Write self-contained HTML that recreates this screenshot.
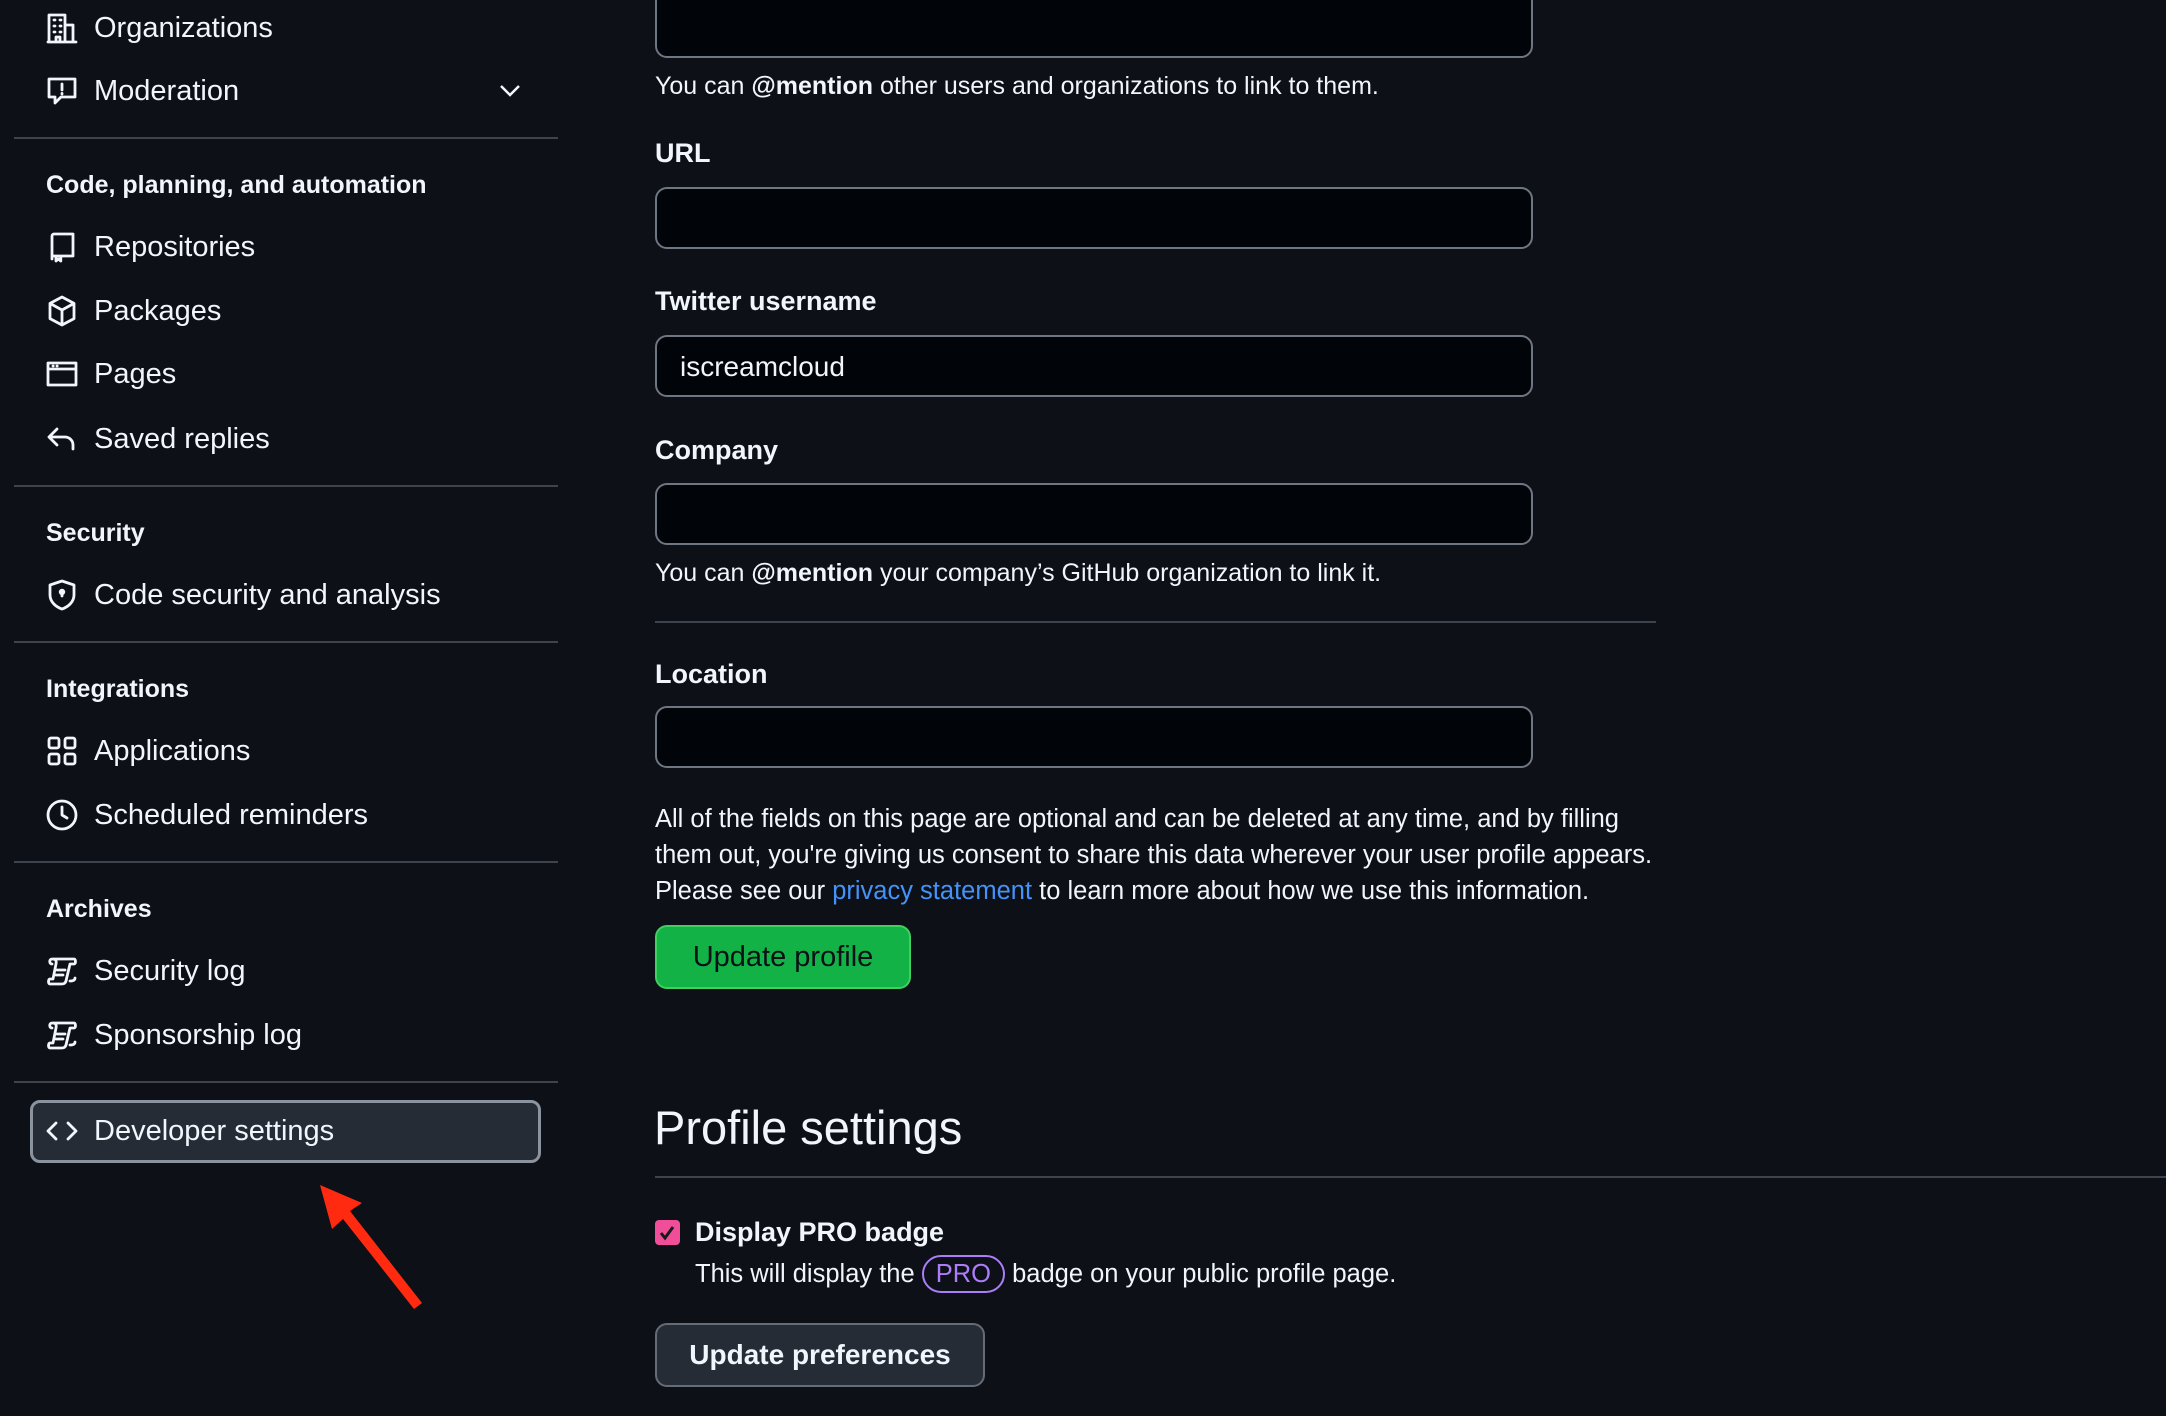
<!DOCTYPE html>
<html><head><meta charset="utf-8"><style>
*{margin:0;padding:0;box-sizing:border-box}
body{width:2166px;height:1416px;background:#0d1016;color:#f0f6fc;font-family:"Liberation Sans",sans-serif;font-size:27px;position:relative;overflow:hidden}
.t{position:absolute;line-height:40px;white-space:nowrap}
.s{font-size:29px}
.h{font-weight:bold;font-size:25px}
.b{font-weight:bold}
.ic{position:absolute;left:46px;width:32px;height:32px}
.ic svg{width:32px;height:32px;fill:none;stroke:#f0f6fc;stroke-width:1.4;stroke-linecap:round;stroke-linejoin:round}
.hr{position:absolute;height:2px;background:#3d444d}
.in{position:absolute;left:655px;width:878px;height:62px;background:#010409;border:2px solid #6e7681;border-radius:12px}
</style></head><body>
<div class="ic" style="top:12px"><svg viewBox="0 0 16 16"><path d="M1.5 15V1.5h8V15M9.5 6.5h4V15M1 15h14M4 4h.5M7 4h.5M4 7h.5M7 7h.5M4 10h.5M7 10h.5M5 15v-2.5h2V15"/></svg></div>
<div class="t s" style="left:94px;top:8px">Organizations</div>
<div class="ic" style="top:75px"><svg viewBox="0 0 16 16"><path d="M1.5 2h13v9h-7l-3 3v-3h-3zM8 4.5v3M8 9.2v.3"/></svg></div>
<div class="t s" style="left:94px;top:71px">Moderation</div>
<svg style="position:absolute;left:498px;top:83px" width="24" height="16" viewBox="0 0 24 16"><path d="M3 3l9 9 9-9" stroke="#f0f6fc" stroke-width="2.5" fill="none"/></svg>
<div class="hr" style="left:14px;width:544px;top:137px"></div>
<div class="t h" style="left:46px;top:165px">Code, planning, and automation</div>
<div class="ic" style="top:231px"><svg viewBox="0 0 16 16"><path d="M3 14V2.5a1 1 0 011-1h9.5v11H3.5M5 12.5V15l1.2-1 1.2 1v-2.5"/></svg></div>
<div class="t s" style="left:94px;top:227px">Repositories</div>
<div class="ic" style="top:295px"><svg viewBox="0 0 16 16"><path d="M8 1l6 3.2v7.6L8 15l-6-3.2V4.2zM2 4.2L8 7.5l6-3.3M8 7.5V15"/></svg></div>
<div class="t s" style="left:94px;top:291px">Packages</div>
<div class="ic" style="top:358px"><svg viewBox="0 0 16 16"><path d="M1 2.5h14v11H1zM1 5.5h14M3.5 4h.1M5.5 4h.1"/></svg></div>
<div class="t s" style="left:94px;top:354px">Pages</div>
<div class="ic" style="top:423px"><svg viewBox="0 0 16 16"><path d="M5.5 3L1.5 7l4 4M1.5 7h8a4 4 0 014 4v2"/></svg></div>
<div class="t s" style="left:94px;top:419px">Saved replies</div>
<div class="hr" style="left:14px;width:544px;top:485px"></div>
<div class="t h" style="left:46px;top:513px">Security</div>
<div class="ic" style="top:579px"><svg viewBox="0 0 16 16"><path d="M8 1l6 2v5c0 3.5-3 6-6 7-3-1-6-3.5-6-7V3zM8 6v2.5"/><circle cx="8" cy="6.5" r=".9"/></svg></div>
<div class="t s" style="left:94px;top:575px">Code security and analysis</div>
<div class="hr" style="left:14px;width:544px;top:641px"></div>
<div class="t h" style="left:46px;top:669px">Integrations</div>
<div class="ic" style="top:735px"><svg viewBox="0 0 16 16"><rect x="1.5" y="1.5" width="5" height="5" rx="1"/><rect x="9.5" y="1.5" width="5" height="5" rx="1"/><rect x="1.5" y="9.5" width="5" height="5" rx="1"/><rect x="9.5" y="9.5" width="5" height="5" rx="1"/></svg></div>
<div class="t s" style="left:94px;top:731px">Applications</div>
<div class="ic" style="top:799px"><svg viewBox="0 0 16 16"><circle cx="8" cy="8" r="7"/><path d="M8 4v4l2.5 1.5"/></svg></div>
<div class="t s" style="left:94px;top:795px">Scheduled reminders</div>
<div class="hr" style="left:14px;width:544px;top:861px"></div>
<div class="t h" style="left:46px;top:889px">Archives</div>
<div class="ic" style="top:955px"><svg viewBox="0 0 16 16"><path d="M3 2h11c1 0 1 2.5 0 2.5H12L10 13c-.5 1.5-1.5 1.5-2.5 1.5H2c-1 0-1-2.5 0-2.5h1.5L5 4.5C5.5 2 4 2 3 2c-1.5 0-1.5 2.5 0 2.5M5.5 7.5h4M5 10h3.5M12 13c1.5 0 2.5-.5 2.5-1.5"/></svg></div>
<div class="t s" style="left:94px;top:951px">Security log</div>
<div class="ic" style="top:1019px"><svg viewBox="0 0 16 16"><path d="M3 2h11c1 0 1 2.5 0 2.5H12L10 13c-.5 1.5-1.5 1.5-2.5 1.5H2c-1 0-1-2.5 0-2.5h1.5L5 4.5C5.5 2 4 2 3 2c-1.5 0-1.5 2.5 0 2.5M5.5 7.5h4M5 10h3.5M12 13c1.5 0 2.5-.5 2.5-1.5"/></svg></div>
<div class="t s" style="left:94px;top:1015px">Sponsorship log</div>
<div class="hr" style="left:14px;width:544px;top:1081px"></div>
<div style="position:absolute;left:30px;top:1100px;width:511px;height:63px;background:#262c36;border:3px solid #8b949e;border-radius:10px"></div>
<div class="ic" style="top:1115px"><svg viewBox="0 0 16 16"><path d="M5 4L1 8l4 4M11 4l4 4-4 4"/></svg></div>
<div class="t s" style="left:94px;top:1111px">Developer settings</div>
<svg style="position:absolute;left:310px;top:1175px" width="120" height="140" viewBox="0 0 120 140"><path d="M10 10L52 28 40 36 112 128 104 134 33 44 22 54z" fill="#ff2a0f"/></svg>
<div class="in" style="top:-20px;height:78px"></div>
<div class="t" style="left:655px;top:66px;font-size:25px">You can <span class="b">@mention</span> other users and organizations to link to them.</div>
<div class="t b" style="left:655px;top:133px">URL</div>
<div class="in" style="top:187px"></div>
<div class="t b" style="left:655px;top:281px">Twitter username</div>
<div class="in" style="top:335px"></div>
<div class="t" style="left:680px;top:347px;font-size:28px">iscreamcloud</div>
<div class="t b" style="left:655px;top:430px">Company</div>
<div class="in" style="top:483px"></div>
<div class="t" style="left:655px;top:553px;font-size:25px">You can <span class="b">@mention</span> your company’s GitHub organization to link it.</div>
<div class="hr" style="left:655px;width:1001px;top:621px"></div>
<div class="t b" style="left:655px;top:654px">Location</div>
<div class="in" style="top:706px"></div>
<div class="t" style="left:655px;top:801px;font-size:25.5px;line-height:36px">All of the fields on this page are optional and can be deleted at any time, and by filling<br>them out, you're giving us consent to share this data wherever your user profile appears.<br>Please see our <span style="color:#4493f8">privacy statement</span> to learn more about how we use this information.</div>
<div style="position:absolute;left:655px;top:925px;width:256px;height:64px;background:#13b246;border:2px solid #40d05f;border-radius:12px;color:#0d1117;font-size:29px;line-height:60px;text-align:center">Update profile</div>
<div class="t" style="left:654px;top:1100px;font-size:47px;line-height:56px">Profile settings</div>
<div class="hr" style="left:655px;width:1511px;top:1176px"></div>
<div style="position:absolute;left:655px;top:1220px;width:25px;height:25px;background:#f04e98;border-radius:4px"><svg width="25" height="25" viewBox="0 0 25 25"><path d="M6 13l4 5 8-11" stroke="#1a1a1a" stroke-width="3" fill="none"/></svg></div>
<div class="t b" style="left:695px;top:1212px">Display PRO badge</div>
<div class="t" style="left:695px;top:1254px;font-size:25.5px">This will display the <span style="display:inline-block;border:2px solid #ab7df8;color:#ab7df8;border-radius:20px;padding:0 12px;line-height:34px">PRO</span> badge on your public profile page.</div>
<div style="position:absolute;left:655px;top:1323px;width:330px;height:64px;background:#262c36;border:2px solid #656c76;border-radius:12px;font-size:28px;line-height:60px;text-align:center;font-weight:bold">Update preferences</div>
</body></html>
